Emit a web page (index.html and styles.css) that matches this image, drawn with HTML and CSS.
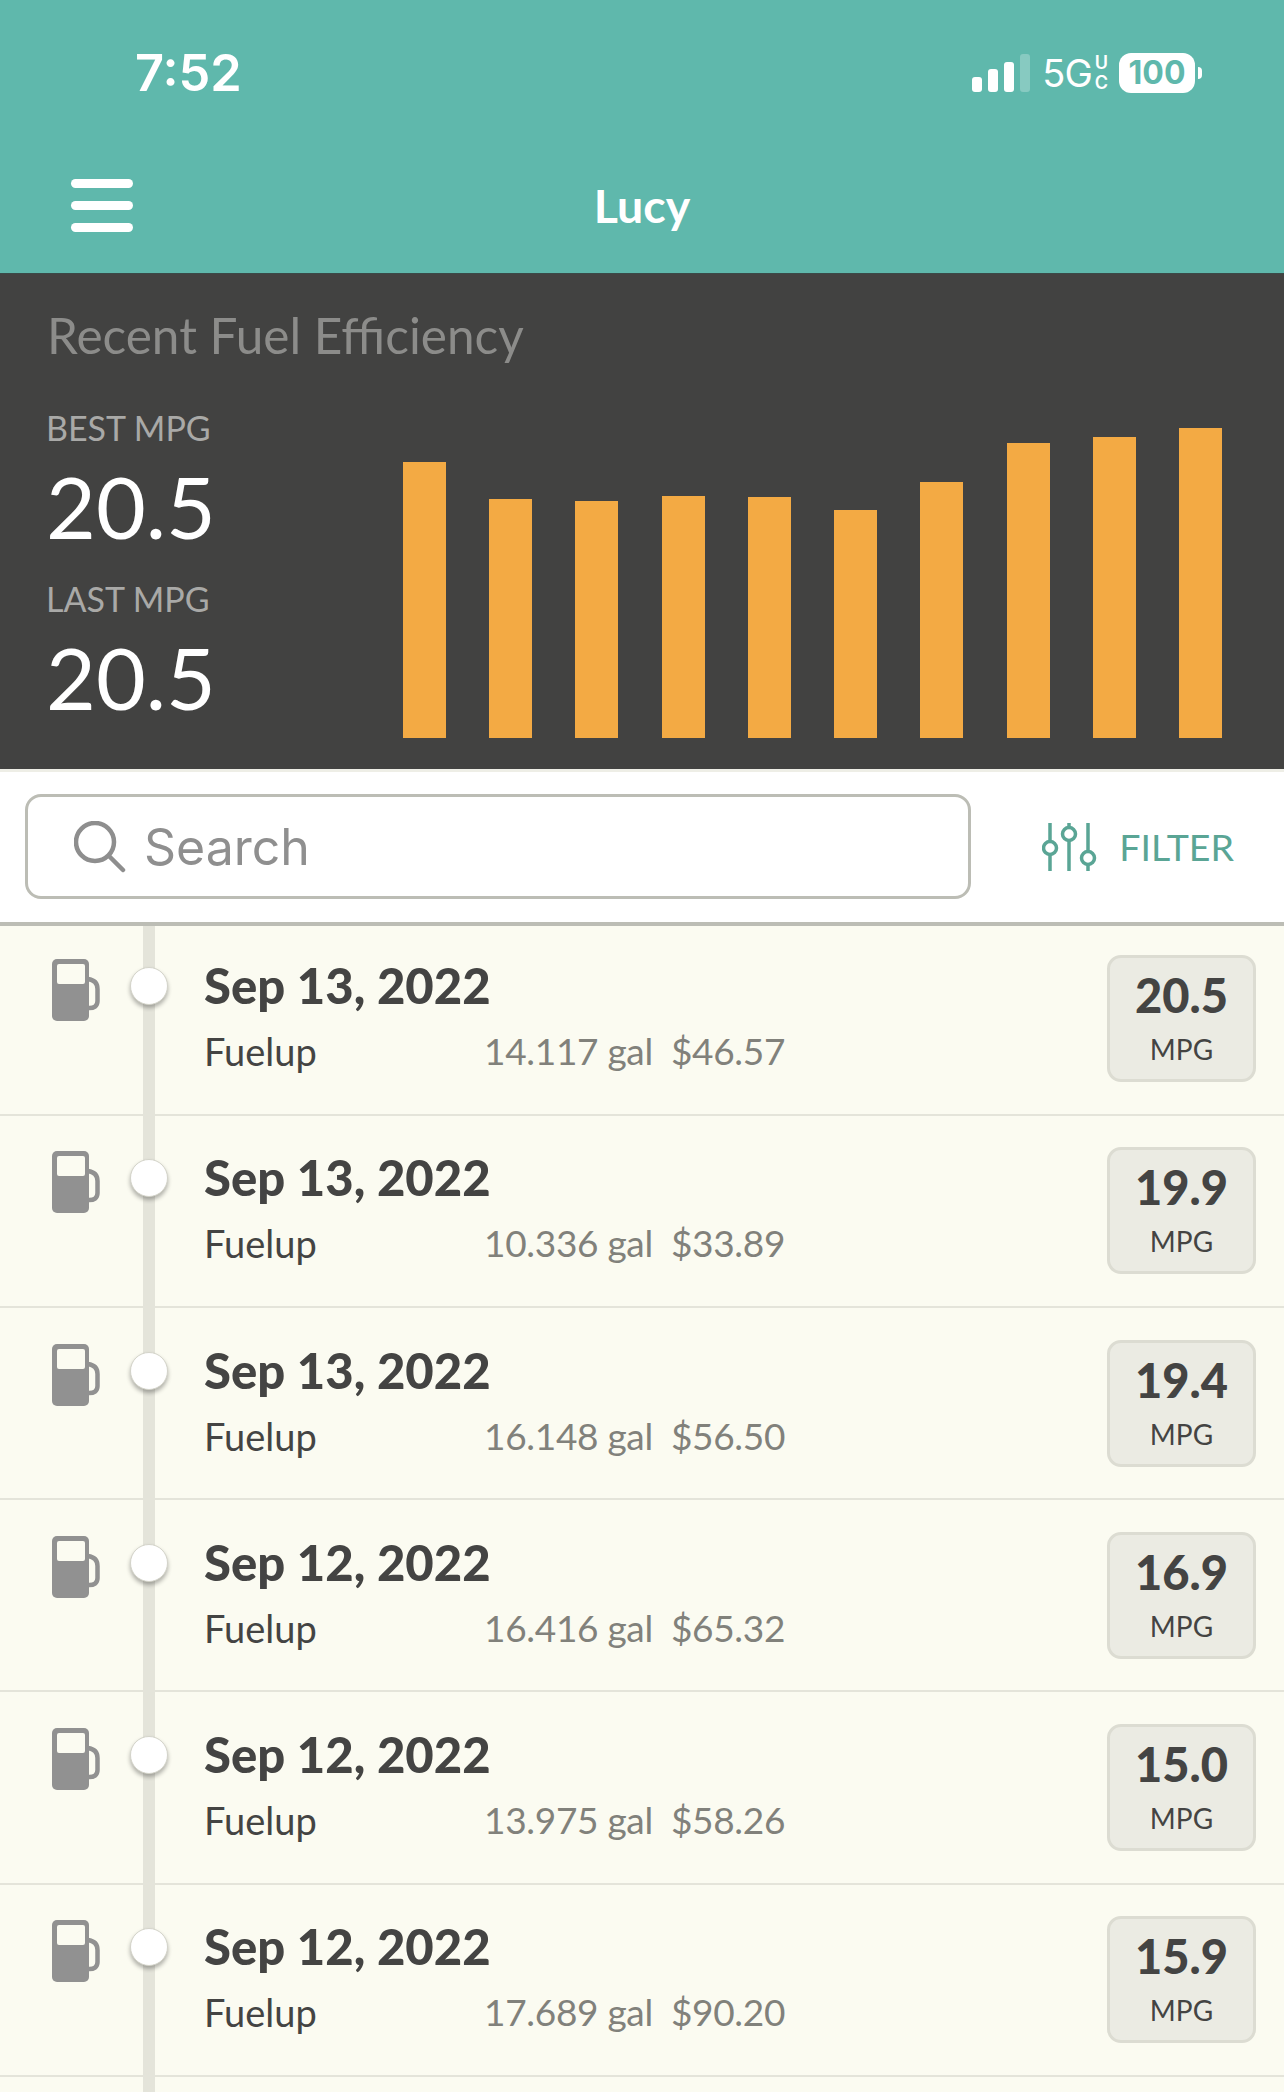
FILE: index.html
```html
<!DOCTYPE html>
<html lang="en">
<head>
    <meta charset="UTF-8">
    <title>Lucy</title>
    <link rel="stylesheet" href="styles.css">
</head>
<body>
    <div class="app">
        <header class="top">
            <div class="status">
                <span class="time">7:52</span>
                <div class="status-right">
                    <svg class="signal" width="60" height="38" viewBox="0 0 60 38">
                        <rect x="1" y="23" width="10" height="15" rx="3" fill="#fff"/>
                        <rect x="17" y="15" width="10" height="23" rx="3" fill="#fff"/>
                        <rect x="33" y="8" width="10" height="30" rx="3" fill="#fff"/>
                        <rect x="49" y="0" width="10" height="38" rx="3" fill="#fff" opacity="0.25"/>
                    </svg>
                    <span class="net">5G</span>
                    <span class="net-uc"><span>U</span><span>C</span></span>
                    <span class="battery">100</span>
                    <span class="battery-nub"></span>
                </div>
            </div>
            <div class="nav">
                <div class="burger"><span></span><span></span><span></span></div>
                <h1>Lucy</h1>
            </div>
        </header>

        <section class="summary">
            <h2>Recent Fuel Efficiency</h2>
            <div class="summary-body">
                <div class="stats">
                    <div class="stat-label">BEST MPG</div>
                    <div class="stat-value">20.5</div>
                    <div class="stat-label stat-last">LAST MPG</div>
                    <div class="stat-value">20.5</div>
                </div>
                <div class="bars">
                    <div class="bar" style="height: 276px"></div>
                    <div class="bar" style="height: 239px"></div>
                    <div class="bar" style="height: 237px"></div>
                    <div class="bar" style="height: 242px"></div>
                    <div class="bar" style="height: 241px"></div>
                    <div class="bar" style="height: 228px"></div>
                    <div class="bar" style="height: 256px"></div>
                    <div class="bar" style="height: 295px"></div>
                    <div class="bar" style="height: 301px"></div>
                    <div class="bar" style="height: 310px"></div>
                </div>
            </div>
        </section>

        <div class="toolbar">
            <div class="search">
                <svg width="52" height="52" viewBox="0 0 52 52" fill="none" stroke="#8e8e8e" stroke-width="4.5" stroke-linecap="round">
                    <circle cx="21" cy="21" r="19"/>
                    <path d="M35 35 L49 49"/>
                </svg>
                <span>Search</span>
            </div>
            <div class="filter">
                <svg width="56" height="50" viewBox="0 0 56 50" fill="none" stroke="#5aa595" stroke-width="3.5">
                    <path d="M8 1V19M8 33V49M27 1V5M27 19V49M46 1V29M46 43V49"/>
                    <circle cx="8" cy="26" r="6.5"/>
                    <circle cx="27" cy="12" r="6.5"/>
                    <circle cx="46" cy="36" r="6.5"/>
                </svg>
                <span>FILTER</span>
            </div>
        </div>

        <div class="list">
            <div class="row">
                <svg class="pump" width="48" height="62" viewBox="0 0 48 62"><use href="#pump"/></svg>
                <div class="dot"></div>
                <div class="info">
                    <div class="date">Sep 13, 2022</div>
                    <div class="meta"><span class="type">Fuelup</span><span class="gal">14.117 gal</span><span>$46.57</span></div>
                </div>
                <div class="mpg"><b>20.5</b><span>MPG</span></div>
            </div>
            <div class="row">
                <svg class="pump" width="48" height="62" viewBox="0 0 48 62"><use href="#pump"/></svg>
                <div class="dot"></div>
                <div class="info">
                    <div class="date">Sep 13, 2022</div>
                    <div class="meta"><span class="type">Fuelup</span><span class="gal">10.336 gal</span><span>$33.89</span></div>
                </div>
                <div class="mpg"><b>19.9</b><span>MPG</span></div>
            </div>
            <div class="row">
                <svg class="pump" width="48" height="62" viewBox="0 0 48 62"><use href="#pump"/></svg>
                <div class="dot"></div>
                <div class="info">
                    <div class="date">Sep 13, 2022</div>
                    <div class="meta"><span class="type">Fuelup</span><span class="gal">16.148 gal</span><span>$56.50</span></div>
                </div>
                <div class="mpg"><b>19.4</b><span>MPG</span></div>
            </div>
            <div class="row">
                <svg class="pump" width="48" height="62" viewBox="0 0 48 62"><use href="#pump"/></svg>
                <div class="dot"></div>
                <div class="info">
                    <div class="date">Sep 12, 2022</div>
                    <div class="meta"><span class="type">Fuelup</span><span class="gal">16.416 gal</span><span>$65.32</span></div>
                </div>
                <div class="mpg"><b>16.9</b><span>MPG</span></div>
            </div>
            <div class="row">
                <svg class="pump" width="48" height="62" viewBox="0 0 48 62"><use href="#pump"/></svg>
                <div class="dot"></div>
                <div class="info">
                    <div class="date">Sep 12, 2022</div>
                    <div class="meta"><span class="type">Fuelup</span><span class="gal">13.975 gal</span><span>$58.26</span></div>
                </div>
                <div class="mpg"><b>15.0</b><span>MPG</span></div>
            </div>
            <div class="row">
                <svg class="pump" width="48" height="62" viewBox="0 0 48 62"><use href="#pump"/></svg>
                <div class="dot"></div>
                <div class="info">
                    <div class="date">Sep 12, 2022</div>
                    <div class="meta"><span class="type">Fuelup</span><span class="gal">17.689 gal</span><span>$90.20</span></div>
                </div>
                <div class="mpg"><b>15.9</b><span>MPG</span></div>
            </div>
        </div>
    </div>

    <svg width="0" height="0" class="defs">
        <defs>
            <g id="pump">
                <path d="M36 20 C43 21 45.5 25 45.5 30 V42 C45.5 47 42 49.5 36 49" fill="none" stroke="#919191" stroke-width="4.5"/>
                <rect x="0" y="0" width="37" height="62" rx="5" fill="#919191"/>
                <rect x="5" y="5" width="28" height="20" rx="2" fill="#fbfbf1"/>
            </g>
        </defs>
    </svg>
</body>
</html>
```

FILE: styles.css
```css
:root {
    --teal: #5fb8ac;
    --dark: #424241;
    --cream: #fbfbf1;
    --line: #e4e4da;
    --text: #444443;
    --muted: #81817b;
}

* {
    margin: 0;
    padding: 0;
    box-sizing: border-box;
}

html, body {
    height: 2092px;
    overflow: hidden;
}

body {
    background-color: var(--cream);
    font-family: 'Lato', 'Liberation Sans', sans-serif;
    color: var(--text);
}

.app {
    display: flex;
    flex-direction: column;
    height: 2092px;
}

.defs {
    display: none;
}

/* top bar */
.top {
    height: 274px;
    background-color: var(--teal);
    color: white;
    border-bottom: 1px solid #3a4a48;
}

.status {
    height: 146px;
    padding: 43px 82px 0 135px;
    display: flex;
    justify-content: space-between;
    align-items: flex-start;
    font-family: 'Inter', 'Liberation Sans', sans-serif;
}

.time {
    font-size: 50.5px;
    font-weight: 600;
    line-height: 60px;
}

.status-right {
    display: flex;
    align-items: center;
    height: 56px;
    margin-top: 2px;
}

.net {
    font-size: 38px;
    font-weight: 400;
    line-height: 40px;
    margin-left: 11px;
    letter-spacing: -1px;
}

.net-uc {
    display: flex;
    flex-direction: column;
    font-size: 18px;
    font-weight: 600;
    line-height: 20px;
    margin-left: 3px;
}

.battery {
    width: 76px;
    height: 40px;
    margin-left: 11px;
    background-color: white;
    border-radius: 12px;
    color: var(--teal);
    font-size: 32px;
    font-weight: 700;
    line-height: 40px;
    text-align: center;
}

.battery-nub {
    width: 4px;
    height: 12px;
    margin-left: 3px;
    background-color: white;
    border-radius: 0 6px 6px 0;
}

.nav {
    position: relative;
    height: 127px;
    padding: 33px 0 0 71px;
}

.burger {
    display: flex;
    flex-direction: column;
    gap: 13px;
    width: 62px;
}

.burger span {
    height: 9px;
    background-color: white;
    border-radius: 5px;
}

.nav h1 {
    position: absolute;
    top: 31px;
    left: 0;
    right: 0;
    text-align: center;
    font-size: 46.5px;
    font-weight: 700;
    line-height: 56px;
}

/* fuel summary */
.summary {
    height: 495px;
    background-color: var(--dark);
    padding: 31px 62px 31px 47px;
    display: flex;
    flex-direction: column;
}

.summary h2 {
    font-size: 49.5px;
    font-weight: 400;
    line-height: 60px;
    color: #8c8c8a;
}

.summary-body {
    display: flex;
    justify-content: space-between;
    flex: 1;
}

.stats {
    padding-top: 42px;
    margin-left: -1px;
}

.stat-label {
    font-size: 34px;
    line-height: 42px;
    color: #a9a9a7;
}

.stat-last {
    margin-top: 19px;
}

.stat-value {
    font-size: 86px;
    line-height: 106px;
    margin-top: 4px;
    color: white;
}

.bars {
    width: 819px;
    display: flex;
    align-items: flex-end;
    justify-content: space-between;
}

.bar {
    width: 43px;
    background-color: #f3aa44;
}

/* search row */
.toolbar {
    height: 157px;
    background-color: white;
    border-top: 3px solid #eeeee6;
    border-bottom: 4px solid #bcbdb5;
    padding: 22px 50px 0 25px;
    display: flex;
    justify-content: space-between;
}

.search {
    width: 946px;
    height: 105px;
    border: 3px solid #bcbdb5;
    border-radius: 16px;
    display: flex;
    align-items: center;
    gap: 18px;
    padding-left: 46px;
    font-family: 'Inter', 'Liberation Sans', sans-serif;
    font-size: 50px;
    color: #8f8f8f;
}

.filter {
    display: flex;
    align-items: center;
    gap: 21px;
    height: 105px;
    font-size: 37.5px;
    color: #5aa595;
}

/* fuelups */
.list {
    flex: 1;
    position: relative;
    background-color: var(--cream);
}

.list::before {
    content: "";
    position: absolute;
    top: 0;
    bottom: 0;
    left: 143px;
    width: 12px;
    background-color: var(--line);
}

.row {
    height: 192.3px;
    border-bottom: 2px solid var(--line);
    padding: 35.7px 28px 0 52px;
    display: flex;
    align-items: flex-start;
}

.row:first-child {
    height: 189.6px;
    padding-top: 33px;
}

.pump {
    flex: none;
}

.dot {
    position: relative;
    flex: none;
    width: 38px;
    height: 38px;
    margin: 8px 0 0 30px;
    background-color: white;
    border-radius: 50%;
    border: 1px solid #d4d4ca;
    box-shadow: 0 3px 4px rgba(0, 0, 0, 0.3);
}

.info {
    flex: 1;
    margin-left: 36px;
}

.date {
    font-size: 49px;
    font-weight: 900;
    line-height: 56px;
    margin-top: -2px;
}

.meta {
    display: flex;
    font-size: 37px;
    letter-spacing: -0.3px;
    line-height: 46px;
    margin-top: 15px;
    color: var(--muted);
}

.type {
    width: 280px;
    font-size: 38px;
    letter-spacing: 0;
    color: var(--text);
}

.gal {
    margin-right: 18px;
}

.mpg {
    width: 149px;
    height: 127px;
    margin-top: -4px;
    background-color: #ebebe3;
    border: 3px solid #dcdcd2;
    border-radius: 14px;
    display: flex;
    flex-direction: column;
    align-items: center;
    padding-top: 9px;
}

.mpg b {
    font-size: 47px;
    font-weight: 900;
    line-height: 56px;
}

.mpg span {
    font-size: 28px;
    line-height: 38px;
    margin-top: 7px;
}
```
